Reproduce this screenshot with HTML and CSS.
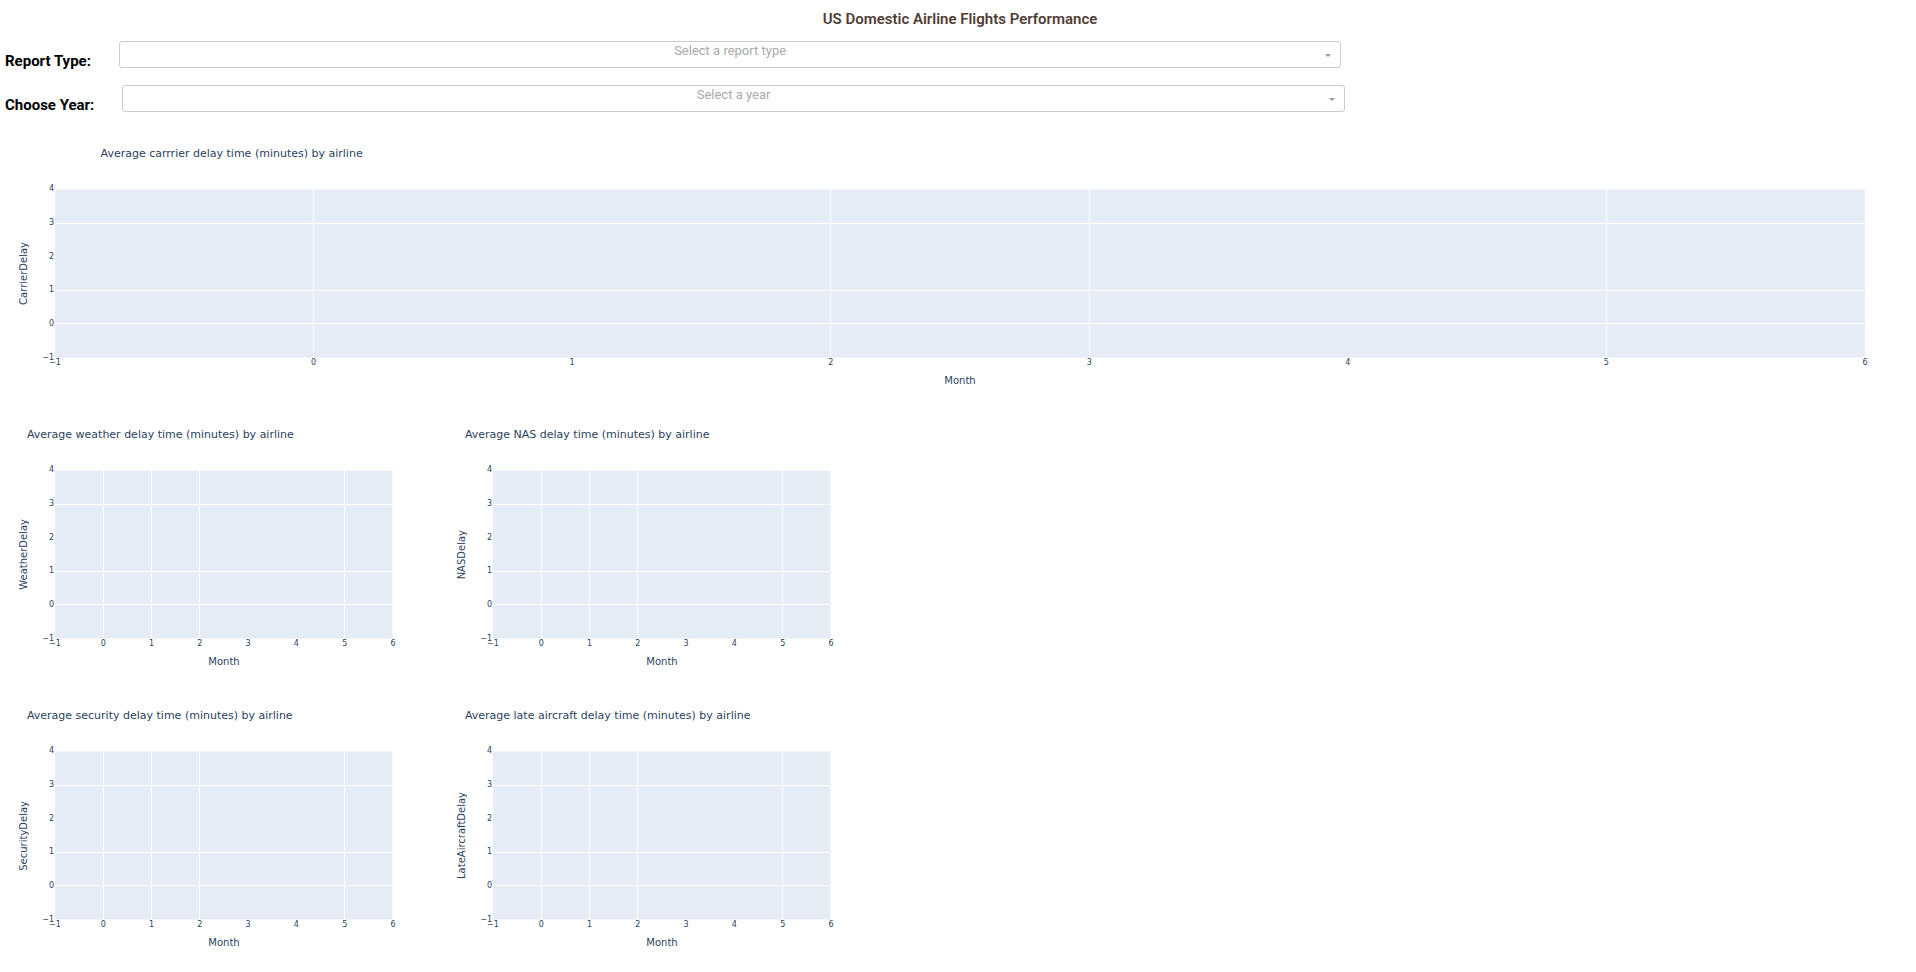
FILE: index.html
```html
<!DOCTYPE html>
<html lang="en">
<head>
<meta charset="utf-8">
<title>US Domestic Airline Flights Performance</title>
<link rel="stylesheet" href="styles.css">
</head>
<body>
<main class="page">
  <h1 class="page-title">US Domestic Airline Flights Performance</h1>

  <form class="filters">
    <div class="field">
      <label class="field-label" for="report-type">Report Type:</label>
      <div class="dropdown">
        <select class="dropdown-select" id="report-type">
          <option value="">Select a report type</option>
        </select>
      </div>
    </div>
    <div class="field">
      <label class="field-label" for="year">Choose Year:</label>
      <div class="dropdown">
        <select class="dropdown-select" id="year">
          <option value="">Select a year</option>
        </select>
      </div>
    </div>
  </form>

  <section class="charts">
    <figure class="chart chart-wide">
      <figcaption class="chart-title">Average carrrier delay time (minutes) by airline</figcaption>
      <div class="y-title">CarrierDelay</div>
      <div class="y-ticks"><span>4</span><span>3</span><span>2</span><span>1</span><span>0</span><span>−1</span></div>
      <div class="plot">
        <div class="rows"><i class="edge"></i><i></i><i class="off"></i><i></i><i></i><i class="edge"></i></div>
        <div class="cols"><i class="off"></i><i></i><i class="off"></i><i></i><i></i><i class="off"></i><i></i><i class="off"></i></div>
      </div>
      <div class="x-ticks"><span>−1</span><span>0</span><span>1</span><span>2</span><span>3</span><span>4</span><span>5</span><span>6</span></div>
      <div class="x-title">Month</div>
    </figure>

    <figure class="chart">
      <figcaption class="chart-title">Average weather delay time (minutes) by airline</figcaption>
      <div class="y-title">WeatherDelay</div>
      <div class="y-ticks"><span>4</span><span>3</span><span>2</span><span>1</span><span>0</span><span>−1</span></div>
      <div class="plot">
        <div class="rows"><i class="edge"></i><i></i><i class="off"></i><i></i><i></i><i class="edge"></i></div>
        <div class="cols"><i class="off"></i><i></i><i></i><i></i><i class="off"></i><i class="off"></i><i></i><i class="edge"></i></div>
      </div>
      <div class="x-ticks"><span>−1</span><span>0</span><span>1</span><span>2</span><span>3</span><span>4</span><span>5</span><span>6</span></div>
      <div class="x-title">Month</div>
    </figure>

    <figure class="chart">
      <figcaption class="chart-title">Average NAS delay time (minutes) by airline</figcaption>
      <div class="y-title">NASDelay</div>
      <div class="y-ticks"><span>4</span><span>3</span><span>2</span><span>1</span><span>0</span><span>−1</span></div>
      <div class="plot">
        <div class="rows"><i class="edge"></i><i></i><i class="off"></i><i></i><i></i><i class="edge"></i></div>
        <div class="cols"><i class="off"></i><i></i><i></i><i></i><i class="off"></i><i class="off"></i><i></i><i class="edge"></i></div>
      </div>
      <div class="x-ticks"><span>−1</span><span>0</span><span>1</span><span>2</span><span>3</span><span>4</span><span>5</span><span>6</span></div>
      <div class="x-title">Month</div>
    </figure>

    <figure class="chart">
      <figcaption class="chart-title">Average security delay time (minutes) by airline</figcaption>
      <div class="y-title">SecurityDelay</div>
      <div class="y-ticks"><span>4</span><span>3</span><span>2</span><span>1</span><span>0</span><span>−1</span></div>
      <div class="plot">
        <div class="rows"><i class="edge"></i><i></i><i class="off"></i><i></i><i></i><i class="edge"></i></div>
        <div class="cols"><i class="off"></i><i></i><i></i><i></i><i class="off"></i><i class="off"></i><i></i><i class="edge"></i></div>
      </div>
      <div class="x-ticks"><span>−1</span><span>0</span><span>1</span><span>2</span><span>3</span><span>4</span><span>5</span><span>6</span></div>
      <div class="x-title">Month</div>
    </figure>

    <figure class="chart">
      <figcaption class="chart-title">Average late aircraft delay time (minutes) by airline</figcaption>
      <div class="y-title">LateAircraftDelay</div>
      <div class="y-ticks"><span>4</span><span>3</span><span>2</span><span>1</span><span>0</span><span>−1</span></div>
      <div class="plot">
        <div class="rows"><i class="edge"></i><i></i><i class="off"></i><i></i><i></i><i class="edge"></i></div>
        <div class="cols"><i class="off"></i><i></i><i></i><i></i><i class="off"></i><i class="off"></i><i></i><i class="edge"></i></div>
      </div>
      <div class="x-ticks"><span>−1</span><span>0</span><span>1</span><span>2</span><span>3</span><span>4</span><span>5</span><span>6</span></div>
      <div class="x-title">Month</div>
    </figure>
  </section>
</main>
</body>
</html>
```

FILE: styles.css
```css
* {
  box-sizing: border-box;
}

body {
  margin: 0;
  background: #fff;
  font-family: Roboto, "Open Sans", sans-serif;
}

.page {
  padding: 9px 1px 0 5px;
}

/* Header and filters */
.page-title {
  margin: 0;
  color: #503d36;
  font-size: 15px;
  font-weight: 600;
  line-height: 20px;
  text-align: center;
}

.filters {
  display: grid;
  gap: 16px;
  padding-top: 12px;
}

.field {
  display: flex;
  gap: 28px;
  height: 28px;
}

.field-label {
  padding-top: 10px;
  color: #000;
  font-size: 15px;
  font-weight: 700;
  line-height: 20px;
  white-space: nowrap;
}

.dropdown {
  position: relative;
  width: 64%;
  height: 27px;
}

.dropdown::after {
  content: "";
  position: absolute;
  top: 13px;
  right: 10px;
  border: solid transparent;
  border-width: 3px 3px 0;
  border-top-color: #999;
  pointer-events: none;
}

.dropdown-select {
  display: block;
  width: 100%;
  height: 100%;
  padding: 0 0 8px;
  appearance: none;
  border: 1px solid #ccc;
  border-radius: 3px;
  background: #fff;
  color: #aaa;
  font: 400 13px/16px Roboto, "Open Sans", sans-serif;
  text-align: center;
  text-align-last: center;
}

/* Charts */
.charts {
  display: grid;
  grid-template-columns: minmax(0, 438px) minmax(0, 438px) 1fr;
  padding-top: 6px;
}

.chart {
  display: grid;
  grid-template: 70px 169px 11px 31px / 12px 38px 1fr 50px;
  margin: 0;
  color: #2a3f5f;
  font-family: "DejaVu Sans", Verdana, sans-serif;
  font-size: 8px;
  line-height: 10px;
}

.chart:nth-child(even) {
  grid-column: 1;
}

.chart-wide {
  grid-column: 1 / -1;
}

.chart-title {
  grid-area: 1 / 1 / 2 / -1;
  align-self: center;
  padding-left: 5%;
  font-size: 11px;
  line-height: 14px;
  white-space: nowrap;
}

.y-title {
  grid-area: 2 / 1;
  place-self: center start;
  padding-right: 12px;
  transform: rotate(180deg);
  writing-mode: vertical-rl;
  font-size: 10px;
  line-height: 14px;
  white-space: nowrap;
}

.y-ticks {
  grid-area: 2 / 2;
  display: flex;
  flex-direction: column;
  justify-content: space-between;
  align-items: flex-end;
  padding-right: 1px;
}

.y-ticks span {
  display: flex;
  align-items: center;
  height: 0;
}

.plot {
  grid-area: 2 / 3;
  display: grid;
  background: #e5ecf6;
}

.rows,
.cols {
  grid-area: 1 / 1;
  display: flex;
  justify-content: space-between;
}

.rows {
  flex-direction: column;
}

.rows i {
  height: 1px;
  background: #fff;
}

.cols i {
  width: 1px;
  background: #fff;
}

.rows .off,
.cols .off {
  background: none;
}

.rows .edge,
.cols .edge {
  background: #f2f5fa;
}

.x-ticks {
  grid-area: 3 / 3;
  display: flex;
  justify-content: space-between;
}

.x-ticks span {
  display: flex;
  justify-content: center;
  width: 0;
}

.x-title {
  grid-area: 4 / 3;
  justify-self: center;
  padding-top: 5px;
  font-size: 10px;
  line-height: 14px;
}
```
